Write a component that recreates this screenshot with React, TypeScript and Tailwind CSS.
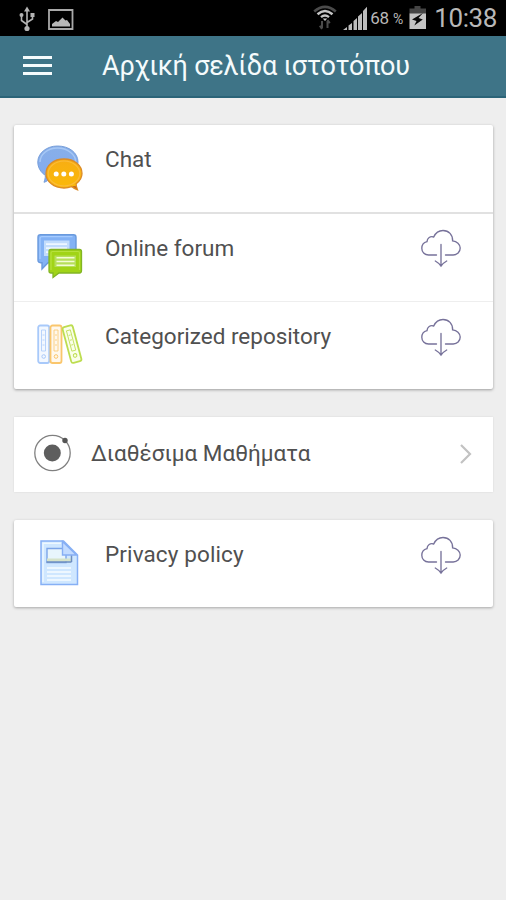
import React from "react";

function UsbIcon() {
  return (
    <svg className="h-[26px] w-[18px] shrink-0" viewBox="0 0 18 26" fill="none" stroke="#b4b4b4" strokeWidth="1.6">
      <path d="M9 4v18M9 18.5l-5.5-4V9M9 16.500l5.500-3.500V9" />
      <path d="M9 0.500l3 5H6z" fill="#b4b4b4" stroke="none" />
      <circle cx="9" cy="22.500" r="2.600" fill="#b4b4b4" stroke="none" />
      <circle cx="3.500" cy="9" r="2" fill="#b4b4b4" stroke="none" />
      <path d="M12.500 7h4v4h-4z" fill="#b4b4b4" stroke="none" />
    </svg>
  );
}

function PictureIcon() {
  return (
    <svg className="ml-3 mt-[2px] h-[22px] w-[26px] shrink-0" viewBox="0 0 26 22">
      <path d="M1 1h23.500v19H1z" fill="none" stroke="#a9a9a9" strokeWidth="1.800" />
      <path d="M4 17.500v-2.500l4-3 2 1 4.500-4.500 3 3 1.500-.5 3 4v2.500z" fill="#b8b8b8" />
    </svg>
  );
}

function WifiIcon() {
  return (
    <svg className="h-[26px] w-[24px] shrink-0" viewBox="0 0 24 26" fill="none">
      <path d="M1.200 6.500Q12-2.800 22.800 6.500" stroke="#4b4b4b" strokeWidth="2.600" />
      <path d="M4.500 9.200Q12 2.800 19.500 9.200" stroke="#c6c6c6" strokeWidth="2.500" />
      <path d="M8 12.200Q12 8.800 16 12.200" stroke="#c6c6c6" strokeWidth="2.300" />
      <path d="M9.700 13.500h4.600L12 16z" fill="#c6c6c6" />
      <path d="M9 16v7M6.800 20.800L9 24M14.500 23v-7M16.800 18.200L14.500 15" stroke="#4b4b4b" strokeWidth="2" />
    </svg>
  );
}

function SignalIcon() {
  return (
    <svg className="ml-[6px] h-[25px] w-[25px] shrink-0" viewBox="0 0 25 25" fill="#bcbcbc">
      <path d="M0 24l4-3v3zM5.500 19.500l3.500-2.500v7H5.500zM10.500 15l3.500-3v12h-3.500zM15 10.500l4-3.500v17h-4zM20 5L24 .8V24h-4z" />
    </svg>
  );
}

function BatteryIcon() {
  return (
    <svg className="h-[24px] w-[18px] shrink-0" viewBox="0 0 18 24">
      <path d="M5.500 0h6v2.500H17V8H.5V2.500h5z" fill="#454545" />
      <path d="M.5 7.500H17V23H.5z" fill="#c4c4c4" />
      <path d="M14 7L3 13.500l4.500 1.500L5.300 19.500l8.500-6-4.300-1.500z" fill="#080808" />
    </svg>
  );
}

function ChatIcon() {
  return (
    <svg className="h-[46px] w-[46px]" viewBox="0 0 46 46">
      <defs>
        <linearGradient id="chatBlue" x2="0" y2="1">
          <stop stopColor="#88afe8" />
          <stop offset="1" stopColor="#82aaf0" />
        </linearGradient>
        <linearGradient id="chatGold" x2="0" y2="1">
          <stop stopColor="#f7ad13" />
          <stop offset="1" stopColor="#fbba08" />
        </linearGradient>
      </defs>
      <path d="M20.500 1C9.500 1 .8 8.200.8 17c0 5.500 3 10.500 7.500 13.300.2 3-.8 5-1.300 7 3-.8 5-2.800 6.500-4.700 2.200.6 4.500.9 7 .9C32 33.500 41 26.300 41 17S32 1 20.500 1z" fill="url(#chatBlue)" stroke="#789fda" strokeWidth="1" />
      <path d="M3 17C3 9.500 10.500 3.100 20.500 3.100S38.700 9.500 38.700 17" fill="none" stroke="#a7c8f5" strokeWidth="1.500" />
      <path d="M27 14C16.500 14 9 20.300 9 28.500S17 43 27 43c2.800 0 5.300-.5 7.500-1.400 1.800 1.500 3.500 2.700 6 3.200-1-2-1.600-4-1.300-6.100C42.800 36 45 32.500 45 28.500 45 20.300 37.500 14 27 14z" fill="url(#chatGold)" stroke="#dc8b26" strokeWidth="1.300" />
      <ellipse cx="27" cy="28.500" rx="15.800" ry="12.500" fill="none" stroke="#fbbb3a" strokeWidth="1.200" />
      <path d="M38.500 41l1.500 3.200-4.800-3z" fill="#c26524" />
      <g fill="#fff">
        <circle cx="19.200" cy="29" r="2.500" />
        <circle cx="26.800" cy="29" r="2.500" />
        <circle cx="34.400" cy="29" r="2.500" />
      </g>
    </svg>
  );
}

function ForumIcon() {
  return (
    <svg className="-mt-px h-[46px] w-[46px]" viewBox="0 0 46 46">
      <path d="M3.500 1.700h33q2.500 0 2.500 2.500v23q0 2.500-2.500 2.500H11L5 36v-6.300H3.500Q1 29.700 1 27.200v-23q0-2.500 2.500-2.500z" fill="#83b2f5" stroke="#6a9add" strokeWidth="1.400" />
      <path d="M3 26V5.500Q3 3.700 5 3.700h30.500" fill="none" stroke="#a5cbff" strokeWidth="1.300" />
      <path d="M7 7.500h25.500V23H7z" fill="#c2dcfc" />
      <path d="M9 11.200h21M9 15.200h21M9 19.200h21" stroke="#eef6ff" strokeWidth="1.800" />
      <path d="M14 16.500h28.500q2 0 2 2v19q0 2.500-2 2.500H22l-6 4.500V40h-2q-2 0-2-2V18.500q0-2 2-2z" fill="#a1d417" stroke="#82b524" strokeWidth="1.300" />
      <path d="M14 37V20q0-1.500 1.500-1.500H41q1.500 0 1.500 1.500v17" fill="none" stroke="#b7e13d" strokeWidth="1.200" />
      <path d="M17.500 22.500H39V34H17.500z" fill="#b6df5b" />
      <path d="M19.500 24.800h18M19.500 28.500h18M19.500 32.200h18" stroke="#f3fcd6" strokeWidth="1.500" />
    </svg>
  );
}

function RepositoryIcon() {
  return (
    <svg className="-mt-px h-[46px] w-[46px]" viewBox="0 0 46 46" fill="none" strokeWidth="1.800">
      <g stroke="#a8c9fa" fill="#f3f8ff">
        <rect x="1.200" y="4.500" width="11" height="37.500" rx="2" />
        <path d="M4.500 9h4v21h-4zM5.500 14h2M5.500 19h2M5.500 24h2" strokeWidth=".8" />
        <circle cx="6.700" cy="35.500" r="1.800" strokeWidth="1" />
      </g>
      <g stroke="#fac66c" fill="#fff8ed">
        <rect x="13.500" y="4.500" width="11" height="37.500" rx="2" />
        <path d="M17 9h4v21h-4zM18 14h2M18 19h2M18 24h2" strokeWidth=".8" />
        <circle cx="19" cy="35.500" r="1.800" strokeWidth="1" />
      </g>
      <g stroke="#bddd50" fill="#faffea" transform="rotate(-15 34.500 23)">
        <rect x="29.700" y="4.700" width="10.500" height="37" rx="2" />
        <path d="M33 9h4v21h-4zM34 14h2M34 19h2M34 24h2" strokeWidth=".8" />
        <circle cx="35" cy="35" r="1.800" strokeWidth="1" />
      </g>
    </svg>
  );
}

function DocumentIcon() {
  return (
    <svg className="-ml-px h-[46px] w-[46px]" viewBox="0 0 46 46">
      <path d="M5 1h22.500l14 14v29.500H5z" fill="#cfe7ff" stroke="#86b0f5" strokeWidth="1.500" />
      <path d="M7 42V3.200h18" fill="none" stroke="#edf8ff" strokeWidth="1.500" />
      <path d="M11 8.500h19v14H11z" fill="#e8f5fc" stroke="#7ca5e8" strokeWidth="1.400" />
      <path d="M11 18.500h24v3H11z" fill="#d5e2c9" />
      <path d="M10.500 22h25M35.500 15v7" stroke="#6e8ebf" strokeWidth="1.500" />
      <path d="M26.500 1.500V15h14z" fill="#c2dbff" stroke="#86aef4" strokeWidth="1.400" />
      <path d="M11 28h24M11 32h24M11 36h24M11 40h24" stroke="#edf7ff" strokeWidth="2" />
    </svg>
  );
}

function CloudDownload() {
  return (
    <svg className="h-[39px] w-[42px] shrink-0" viewBox="0 0 42 39" fill="none" stroke="#77729a" strokeWidth="1.350" strokeLinecap="round">
      <path d="M16.500 26H8.500C4.500 26 1.800 23 1.800 19.300c0-3.200 2-5.900 5.200-6.700C7.200 9 10.300 6.800 13.700 8 15.500 4 18.900 1.500 23 1.500c5.800 0 9.800 4.300 9.600 10.300 4.200.5 7.600 3.500 7.600 7.300 0 4-3.100 6.900-7 6.900h-7.700" />
      <path d="M21 15.500v21.500M15.300 32q3.500 2 5.700 5 2.200-3 5.700-5" />
    </svg>
  );
}

function ResourceRow({ icon, label, tracking = "", cloudMargin = "mt-4" }: { icon: React.ReactNode; label: string; tracking?: string; cloudMargin?: string | null }) {
  return (
    <div className="flex h-[87px] items-start pl-[23px] pr-[31px]">
      <div className="mt-5 w-[68px] shrink-0">{icon}</div>
      <span className={`mt-[19px] whitespace-nowrap text-[22.500px] leading-[30px] ${tracking}`}>{label}</span>
      {cloudMargin && <div className={`ml-auto ${cloudMargin}`}><CloudDownload /></div>}
    </div>
  );
}

export default function App() {
  return (
    <div className="h-[900px] w-[506px] overflow-hidden bg-[#eeeeee] font-['Roboto','Noto_Sans',sans-serif] text-[#505050]">
      <div className="flex h-9 items-center bg-black text-[#b8b8b8]">
        <div className="flex items-center pl-[18px] pt-[2px]">
          <UsbIcon />
          <PictureIcon />
        </div>
        <div className="ml-auto flex items-center pr-[9px]">
          <WifiIcon />
          <SignalIcon />
          <span className="ml-[2px] mt-[2px] w-[39px] whitespace-nowrap text-[17px] tracking-[-0.2px]">68 <span className="text-[14px]">%</span></span>
          <BatteryIcon />
          <span className="ml-[7px] whitespace-nowrap text-[26px] leading-9 tracking-[-0.4px]">10:38</span>
        </div>
      </div>
      <header className="flex h-[62px] items-center border-b-2 border-[#2b6478] bg-[#3e7487] pl-[23px] text-[#f5fbfc]">
        <div className="mb-[2px] flex w-[29px] flex-col gap-[5px]">
          <div className="h-[3px] bg-current" />
          <div className="h-[3px] bg-current" />
          <div className="h-[3px] bg-current" />
        </div>
        <h1 className="ml-[50px] whitespace-nowrap text-[27px] leading-9 tracking-[-0.22px]">Αρχική σελίδα ιστοτόπου</h1>
      </header>
      <main className="flex flex-col pl-[14px] pr-[13px] pt-[27px]">
        <section className="h-[264px] rounded-[2px] bg-white shadow-[0_1px_3px_rgba(0,0,0,0.35)]">
          <ResourceRow icon={<ChatIcon />} label="Chat" cloudMargin={null} />
          <div className="h-[2px] bg-[#e1e1e1]" />
          <ResourceRow icon={<ForumIcon />} label="Online forum" cloudMargin="mt-[15px]" />
          <div className="h-px bg-[#eeeeee]" />
          <ResourceRow icon={<RepositoryIcon />} label="Categorized repository" />
        </section>
        <section className="mt-7 flex h-[75px] items-center bg-white pl-5 pr-[21px] shadow-[0_0_2px_rgba(0,0,0,0.1)]">
          <svg className="mb-1 h-[38px] w-[38px]" viewBox="0 0 38 38">
            <circle cx="18.500" cy="19" r="17.700" fill="none" stroke="#808080" strokeWidth="1.300" />
            <circle cx="18.300" cy="19" r="8.500" fill="#5e5e5e" />
            <circle cx="31" cy="6.500" r="2.700" fill="#555" />
          </svg>
          <span className="mb-[3px] ml-[19px] whitespace-nowrap text-[22.500px] leading-[30px]">Διαθέσιμα Μαθήματα</span>
          <svg className="mb-[2px] ml-auto h-5 w-3" viewBox="0 0 12 20" fill="none" stroke="#c2c2c2" strokeWidth="2.200"><path d="M1 1l9 9-9 9" /></svg>
        </section>
        <section className="mt-7 rounded-[2px] bg-white shadow-[0_1px_3px_rgba(0,0,0,0.3)]">
          <ResourceRow icon={<DocumentIcon />} label="Privacy policy" tracking="tracking-[0.12px]" />
        </section>
      </main>
    </div>
  );
}
